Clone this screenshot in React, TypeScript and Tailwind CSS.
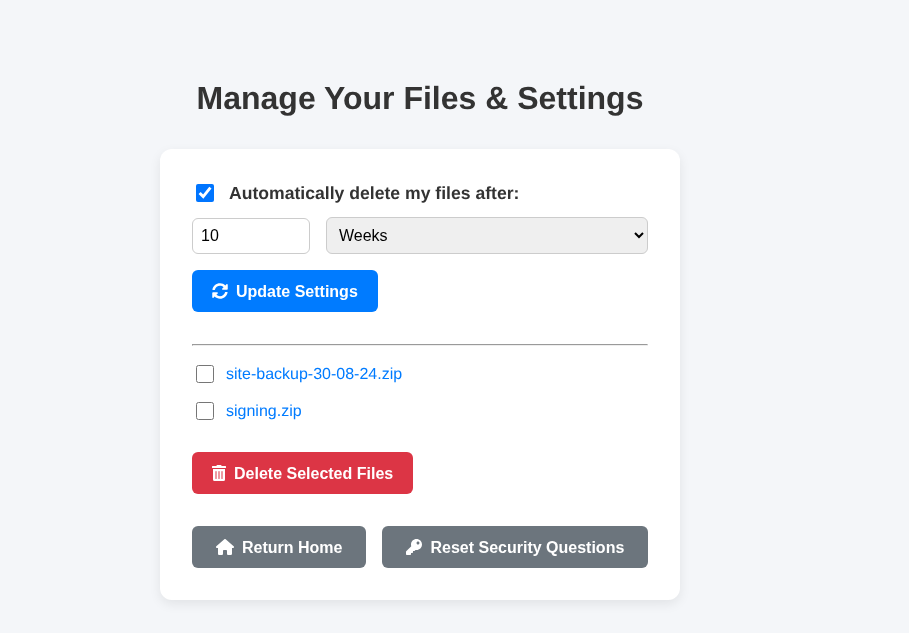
import { FaKey, FaSyncAlt, FaTrashAlt } from "react-icons/fa";
import { FaHouse } from "react-icons/fa6";

const font = "font-['Liberation_Sans',Arial,sans-serif] [text-rendering:geometricPrecision]";

function Button({ color, icon, label, padding = "px-5" }: { color: string; icon: React.ReactNode; label: string; padding?: string }) {
  return (
    <button type="button" className={`flex h-[42px] items-center justify-center gap-2 whitespace-nowrap rounded-md text-base font-bold text-white ${padding} ${color}`}>
      {icon}
      <span className="pt-[2px]">{label}</span>
    </button>
  );
}

function FileRow({ name }: { name: string }) {
  return (
    <div className="flex h-[37px] items-center">
      <input type="checkbox" className="ml-1 h-[18px] w-[18px]" />
      <a href="#" className="ml-3 pt-[2px] text-base text-[#007bff]">
        {name}
      </a>
    </div>
  );
}

export default function App() {
  return (
    <div className={`${font} min-h-[633px] bg-[#f4f6f9] pl-[160px] pt-[78px] text-[#333]`}>
      <div className="w-[520px] [will-change:transform]">
        <h1 className="h-[37px] whitespace-nowrap text-center text-[32px] font-bold leading-[40px]">Manage Your Files &amp; Settings</h1>
        <div className="mt-[34px] rounded-xl bg-white px-8 pb-8 pt-[32px] shadow-[0_4px_12px_rgba(0,0,0,0.08)]">
          <label className="flex h-6 items-center">
            <input type="checkbox" defaultChecked className="ml-1 h-[18px] w-[18px]" />
            <span className="ml-[15px] text-[17.6px] font-bold leading-6">Automatically delete my files after:</span>
          </label>
          <div className="mt-3 flex items-center gap-4">
            <input
              type="number"
              defaultValue={10}
              className="h-9 w-[118px] rounded-md border border-[#ccc] bg-white px-2 text-base text-black [appearance:textfield]"
            />
            <select defaultValue="Weeks" className="h-[37px] flex-1 rounded-md border border-[#ccc] bg-[#efefef] px-2 text-base text-black">
              <option>Days</option>
              <option>Weeks</option>
              <option>Months</option>
            </select>
          </div>
          <div className="mt-4 flex">
            <Button color="bg-[#007bff]" icon={<FaSyncAlt className="h-4 w-4" />} label="Update Settings" />
          </div>
          <hr className="mt-8 border border-t-[#9a9a9a] border-r-[#eee] border-b-[#eee] border-l-[#9a9a9a]" />
          <div className="mt-[9px]">
            <FileRow name="site-backup-30-08-24.zip" />
            <FileRow name="signing.zip" />
          </div>
          <div className="mt-[23px] flex">
            <Button color="bg-[#dc3545]" icon={<FaTrashAlt className="h-4 w-[14px]" />} label="Delete Selected Files" />
          </div>
          <div className="mt-8 flex gap-4">
            <Button color="bg-[#6c757d]" padding="px-6" icon={<FaHouse className="h-4 w-[18px]" />} label="Return Home" />
            <Button color="bg-[#6c757d]" padding="px-6" icon={<FaKey className="h-4 w-4" />} label="Reset Security Questions" />
          </div>
        </div>
      </div>
    </div>
  );
}
